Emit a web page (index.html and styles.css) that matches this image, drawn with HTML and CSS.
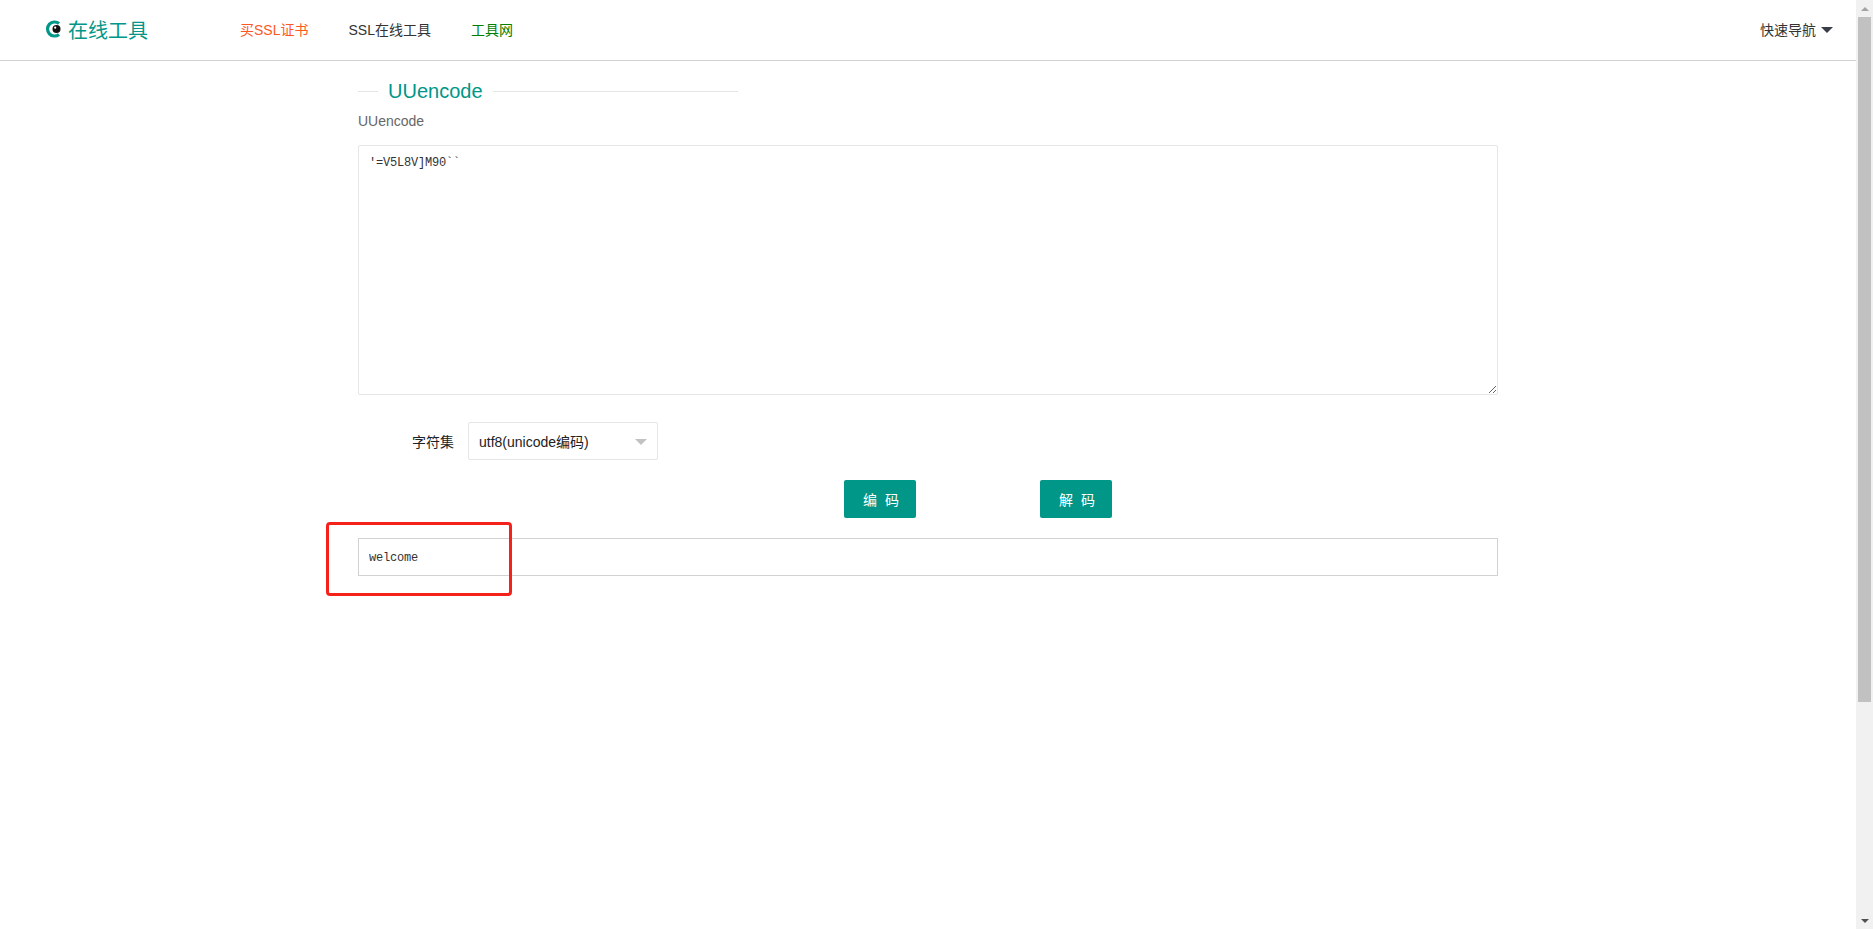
FILE: index.html
```html
<!DOCTYPE html>
<html lang="en">
<head>
    <meta charset="UTF-8">
    <title>UUencode</title>
    <link rel="stylesheet" href="styles.css">
</head>
<body>
    <div class="page">
        <div class="main">
            <div class="header">
                <a href="#" class="logo">
                    <svg class="logo-icon" width="18" height="20" viewBox="0 0 18 20">
                        <path d="M14 4.6 A7 7 0 1 0 14 15.4" fill="none" stroke="#009688" stroke-width="3.2"/>
                        <circle cx="11.5" cy="10" r="4" fill="#111"/>
                        <circle cx="10.2" cy="8.7" r="1.1" fill="#fff"/>
                    </svg>
                    <span>在线工具</span>
                </a>
                <ul class="nav">
                    <li><a href="#" class="nav-orange">买SSL证书</a></li>
                    <li><a href="#">SSL在线工具</a></li>
                    <li><a href="#" class="nav-green">工具网</a></li>
                </ul>
                <a href="#" class="quick-nav">快速导航<span class="caret"></span></a>
            </div>

            <div class="content">
                <div class="field-title">
                    <span>UUencode</span>
                </div>
                <p class="desc">UUencode</p>

                <textarea class="code-input">'=V5L8V]M90``</textarea>

                <div class="form-row">
                    <label class="form-label">字符集</label>
                    <div class="select-box">
                        <span>utf8(unicode编码)</span>
                        <span class="select-arrow"></span>
                    </div>
                </div>

                <div class="btn-row">
                    <button class="btn">编 码</button>
                    <button class="btn">解 码</button>
                </div>

                <div class="result-wrap">
                    <input class="result" type="text" value="welcome">
                    <div class="mark"></div>
                </div>
            </div>
        </div>

        <div class="scrollbar">
            <div class="scroll-btn"><span class="arrow-up"></span></div>
            <div class="scroll-track"><div class="scroll-thumb"></div></div>
            <div class="scroll-btn"><span class="arrow-down"></span></div>
        </div>
    </div>
</body>
</html>
```

FILE: styles.css
```css
* {
    margin: 0;
    padding: 0;
    box-sizing: border-box;
}

html, body {
    height: 100%;
    overflow: hidden;
}

body {
    background: #fff;
    color: #333;
    font-family: "Liberation Sans", "Noto Sans CJK SC", sans-serif;
    font-size: 14px;
}

a {
    text-decoration: none;
    color: #333;
}

.page {
    display: flex;
    height: 929px;
}

.main {
    flex: 1;
    min-width: 0;
}

/* header */
.header {
    display: flex;
    align-items: center;
    height: 61px;
    padding: 0 23px 2px 45px;
    border-bottom: 1px solid #d2d2d2;
}

.logo {
    display: flex;
    align-items: center;
    gap: 5px;
    width: 195px;
    color: #009688;
    font-size: 20px;
}

.nav {
    display: flex;
    flex: 1;
    gap: 40px;
    list-style: none;
}

.nav-orange {
    color: #ff5722;
}

.nav-green {
    color: #008000;
}

.quick-nav {
    display: flex;
    align-items: center;
    gap: 5px;
}

.caret {
    width: 0;
    height: 0;
    margin-top: 1px;
    border-left: 6px solid transparent;
    border-right: 6px solid transparent;
    border-top: 6px solid #393d49;
}

/* content */
.content {
    width: 1140px;
    margin-left: 358px;
    padding-top: 16px;
}

.field-title {
    display: flex;
    align-items: center;
    width: 380px;
    height: 28px;
    font-size: 20px;
    color: #009688;
}

.field-title::before {
    content: "";
    width: 20px;
    border-top: 1px solid #e6e6e6;
}

.field-title::after {
    content: "";
    flex: 1;
    border-top: 1px solid #e6e6e6;
}

.field-title span {
    padding: 0 10px;
}

.desc {
    margin-top: 6px;
    line-height: 20px;
    color: #666;
}

.code-input {
    display: block;
    width: 100%;
    height: 250px;
    margin-top: 14px;
    padding: 7px 10px;
    border: 1px solid #e6e6e6;
    border-radius: 2px;
    outline: none;
    color: #333;
    font-family: "Liberation Mono", monospace;
    font-size: 12px;
    letter-spacing: -0.2px;
    line-height: 20px;
}

.form-row {
    display: flex;
    align-items: center;
    margin-top: 27px;
}

.form-label {
    width: 96px;
    text-align: right;
    color: #222;
}

.select-box {
    display: flex;
    align-items: center;
    justify-content: space-between;
    width: 190px;
    height: 38px;
    margin-left: 14px;
    padding: 0 10px;
    border: 1px solid #e6e6e6;
    border-radius: 2px;
    color: #222;
}

.select-arrow {
    width: 0;
    height: 0;
    margin-top: 2px;
    border-left: 6px solid transparent;
    border-right: 6px solid transparent;
    border-top: 6px solid #c2c2c2;
}

.btn-row {
    display: flex;
    gap: 124px;
    margin-top: 20px;
    padding-left: 486px;
}

.btn {
    width: 72px;
    height: 38px;
    padding-left: 4px;
    border: none;
    border-radius: 2px;
    background: #009688;
    color: #fff;
    font-family: inherit;
    font-size: 14px;
    letter-spacing: 2px;
}

.result-wrap {
    position: relative;
    margin-top: 20px;
}

.result {
    display: block;
    width: 100%;
    height: 38px;
    padding: 2px 10px 0;
    border: 1px solid #d2d2d2;
    outline: none;
    color: #333;
    font-family: "Liberation Mono", monospace;
    font-size: 12px;
    letter-spacing: -0.2px;
}

/* red annotation drawn on top of the result box */
.mark {
    position: absolute;
    left: -32px;
    top: -16px;
    width: 186px;
    height: 74px;
    border: 3px solid #f5211b;
    border-radius: 4px;
}

/* scrollbar */
.scrollbar {
    display: flex;
    flex-direction: column;
    width: 17px;
    background: #f1f1f1;
}

.scroll-btn {
    display: flex;
    align-items: center;
    justify-content: center;
    height: 17px;
}

.arrow-up, .arrow-down {
    width: 0;
    height: 0;
    border-left: 4px solid transparent;
    border-right: 4px solid transparent;
}

.arrow-up {
    border-bottom: 4px solid #a3a3a3;
}

.arrow-down {
    border-top: 4px solid #505050;
}

.scroll-track {
    flex: 1;
}

.scroll-thumb {
    height: 685px;
    margin: 0 2px;
    background: #c1c1c1;
}
```
